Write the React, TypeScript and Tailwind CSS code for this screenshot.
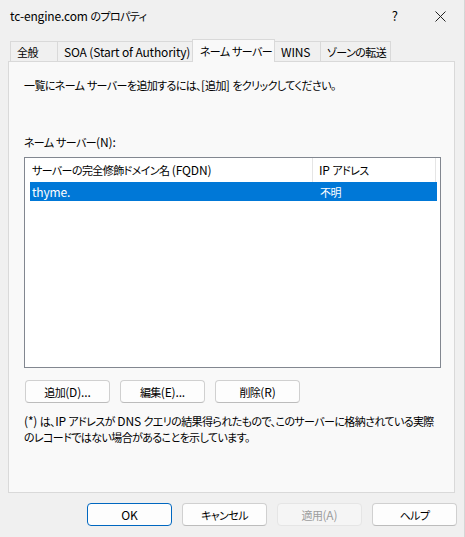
import React from "react";

const CJK = /([\u3000-\u30ff\u4e00-\u9fff\uff00-\uffef]+)/;

function T({ children }: { children: string }) {
  const parts = children.split(CJK);
  return (
    <span>
      {parts.map((p, i) =>
        i % 2 === 1 ? (
          <span key={i} className="text-[11px] tracking-[-0.6px]">
            {p}
          </span>
        ) : (
          <span key={i} className="tracking-[-0.15px]">
            {p}
          </span>
        )
      )}
    </span>
  );
}

function Btn({
  children,
  primary,
  disabled,
}: {
  children: string;
  primary?: boolean;
  disabled?: boolean;
}) {
  const base =
    "w-[85px] h-[23px] flex items-center justify-center rounded-[4px] text-[12px] leading-none whitespace-nowrap";
  if (primary)
    return (
      <div className={`${base} border-[1.5px] border-[#0067c0] bg-[#fdfdfd] text-black`}>
        <T>{children}</T>
      </div>
    );
  if (disabled)
    return (
      <div className={`${base} border border-[#e5e5e5] bg-[#f5f5f5] text-[#9d9d9d]`}>
        <T>{children}</T>
      </div>
    );
  return (
    <div className={`${base} border border-[#d0d0d0] border-b-[#bcbcbc] bg-[#fdfdfd] text-black`}>
      <T>{children}</T>
    </div>
  );
}

function Tab({
  label,
  width,
  selected,
}: {
  label: string;
  width: number;
  selected?: boolean;
}) {
  if (selected)
    return (
      <div
        className="relative z-10 h-[23px] -mb-px flex items-start pt-[2px] pl-[7px] border border-b-0 border-[#d9d9d9] bg-[#f9f9f9] text-[12px] text-black -mx-px whitespace-nowrap"
        style={{ width: width + 2 }}
      >
        <T>{label}</T>
      </div>
    );
  return (
    <div
      className="h-[20px] flex items-center pl-[6px] border border-b-0 border-[#d9d9d9] bg-[#f0f0f0] text-[12px] text-black -mr-px whitespace-nowrap"
      style={{ width: width + 1 }}
    >
      <T>{label}</T>
    </div>
  );
}

export default function App() {
  return (
    <div className="w-[465px] h-[537px] bg-[#f0f0f0] flex flex-col border-r border-[#d6d6d6] overflow-hidden font-['Noto_Sans_CJK_JP',sans-serif] [font-feature-settings:'palt']">
      {/* title bar */}
      <div className="h-[32px] flex items-center pl-[10px] pr-[18px]">
        <div className="text-[12px] text-black flex-1 whitespace-nowrap">
          <T>tc-engine.com のプロパティ</T>
        </div>
        <div className="text-[13px] text-black mr-[37px]">?</div>
        <svg width="11" height="11" viewBox="0 0 11 11">
          <path d="M0.5 0.5 L10.5 10.5 M10.5 0.5 L0.5 10.5" stroke="#222" strokeWidth="1" fill="none" />
        </svg>
      </div>

      {/* tabs */}
      <div className="mt-[7px] ml-[10px] h-[22px] flex items-end">
        <Tab label="全般" width={47} />
        <Tab label="SOA (Start of Authority)" width={136} />
        <Tab label="ネーム サーバー" width={81} selected />
        <Tab label="WINS" width={46} />
        <Tab label="ゾーンの転送" width={70} />
      </div>

      {/* panel */}
      <div className="ml-[8px] w-[447px] h-[432px] border border-[#d9d9d9] bg-[#f9f9f9] flex flex-col pl-[15px] text-[12px] text-black">
        <div className="mt-[15px] leading-[16px] whitespace-nowrap">
          <T>一覧にネーム サーバーを追加するには、[追加] をクリックしてください。</T>
        </div>
        <div className="mt-[41px] leading-[16px] whitespace-nowrap">
          <T>ネーム サーバー(N):</T>
        </div>

        {/* list */}
        <div className="mt-[7px] w-[417px] h-[211px] border border-[#828790] bg-white flex flex-col">
          <div className="h-[24px] flex whitespace-nowrap">
            <div className="w-[288px] flex items-center pl-[7px] border-r border-[#e5e5e5]">
              <T>サーバーの完全修飾ドメイン名 (FQDN)</T>
            </div>
            <div className="w-[123px] flex items-center pl-[6px] border-r border-[#e5e5e5]">
              <T>IP アドレス</T>
            </div>
          </div>
          <div className="ml-[5px] w-[407px] h-[19px] bg-[#0078d7] text-white flex items-center whitespace-nowrap">
            <div className="w-[283px] pl-[2px]">
              <T>thyme.</T>
            </div>
            <div className="pl-[7px]">
              <T>不明</T>
            </div>
          </div>
        </div>

        {/* buttons */}
        <div className="mt-[12px] ml-px flex gap-[10px]">
          <Btn>追加(D)...</Btn>
          <Btn>編集(E)...</Btn>
          <Btn>削除(R)</Btn>
        </div>

        <div className="mt-[10px] leading-[16px] whitespace-nowrap">
          <T>(*) は、IP アドレスが DNS クエリの結果得られたもので、このサーバーに格納されている実際</T>
          <br />
          <T>のレコードではない場合があることを示しています。</T>
        </div>
      </div>

      {/* bottom buttons */}
      <div className="mt-[10px] ml-[87px] flex gap-[10px]">
        <Btn primary>OK</Btn>
        <Btn>キャンセル</Btn>
        <Btn disabled>適用(A)</Btn>
        <Btn>ヘルプ</Btn>
      </div>
    </div>
  );
}
